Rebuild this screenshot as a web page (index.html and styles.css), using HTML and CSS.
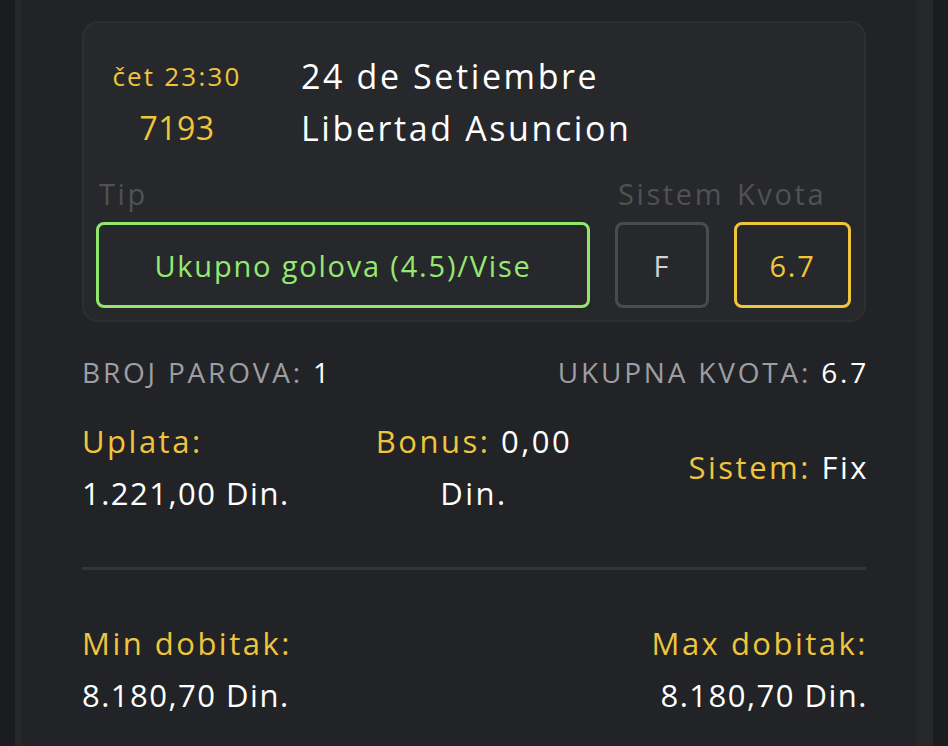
FILE: index.html
```html
<!DOCTYPE html>
<html lang="sr">
<head>
    <meta charset="UTF-8">
    <meta name="viewport" content="width=device-width, initial-scale=1.0">
    <title>Tiket</title>
    <link rel="stylesheet" href="styles.css">
</head>
<body>

    <div class="panel">
        <div class="match-card">
            <div class="match-head">
                <span class="match-time">čet 23:30</span>
                <span class="match-name">24 de Setiembre</span>
                <span class="match-code">7193</span>
                <span class="match-name">Libertad Asuncion</span>
            </div>

            <div class="pick-grid">
                <span class="pick-label">Tip</span>
                <span class="pick-label">Sistem</span>
                <span class="pick-label">Kvota</span>
                <div class="pick-box pick-tip">Ukupno golova (4.5)/Vise</div>
                <div class="pick-box pick-sys">F</div>
                <div class="pick-box pick-odd">6.7</div>
            </div>
        </div>

        <div class="summary">
            <p><span class="muted">BROJ PAROVA:</span> 1</p>
            <p class="summary-right"><span class="muted">UKUPNA KVOTA:</span> 6.7</p>
        </div>

        <div class="stake">
            <div class="stake-col">
                <p class="gold">Uplata:</p>
                <p class="amount">1.221,00 Din.</p>
            </div>
            <div class="stake-col stake-mid">
                <p><span class="gold">Bonus:</span> 0,00</p>
                <p>Din.</p>
            </div>
            <div class="stake-col stake-right">
                <p><span class="gold">Sistem:</span> Fix</p>
            </div>
        </div>

        <hr class="divider">

        <div class="payout">
            <div>
                <p class="gold">Min dobitak:</p>
                <p class="amount">8.180,70 Din.</p>
            </div>
            <div class="payout-right">
                <p class="gold">Max dobitak:</p>
                <p class="amount">8.180,70 Din.</p>
            </div>
        </div>
    </div>

</body>
</html>
```

FILE: styles.css
```css
* {
    margin: 0;
    padding: 0;
    box-sizing: border-box;
}

body {
    font-family: 'Open Sans', 'Noto Sans', sans-serif;
    background: #1b1c1f;
    color: #fff;
    padding: 0 15px;
    height: 746px;
    overflow: hidden;
}

.panel {
    background: #222326;
    border-left: 6px solid #262729;
    border-right: 17px solid #262729;
    min-height: 746px;
    padding: 21px 50px 0 61px;
}

/* Kartica meca */
.match-card {
    background: #27282b;
    border: 2px solid #2e2f32;
    border-radius: 16px;
    padding: 27px 13px 12px 12px;
}

.match-head {
    display: grid;
    grid-template-columns: 162px 1fr;
    column-gap: 43px;
    line-height: 52px;
}

.match-time {
    color: #efc53e;
    font-size: 26px;
    letter-spacing: 2.2px;
    text-align: center;
}

.match-code {
    color: #efc53e;
    font-size: 32px;
    letter-spacing: 0.5px;
    text-align: center;
}

.match-name {
    font-size: 34px;
    letter-spacing: 2.6px;
}

.pick-grid {
    display: grid;
    grid-template-columns: 494px 94px 117px;
    column-gap: 25px;
    margin-top: 20px;
}

.pick-label {
    color: #505155;
    font-size: 29px;
    letter-spacing: 2.6px;
    line-height: 40px;
    padding-left: 3px;
    margin-bottom: 8px;
    white-space: nowrap;
}

.pick-box {
    height: 86px;
    border-radius: 8px;
    border: 3px solid;
    display: flex;
    align-items: center;
    justify-content: center;
    font-size: 29px;
    letter-spacing: 1.8px;
}

.pick-tip {
    border-color: #8fe86b;
    color: #95e872;
}

.pick-sys {
    border-color: #4a4b4e;
    color: #d2d2d4;
}

.pick-odd {
    border-color: #f0c53c;
    color: #f0c53c;
}

/* Zbirni podaci */
.summary {
    display: flex;
    justify-content: space-between;
    margin-top: 32px;
    font-size: 28px;
    letter-spacing: 2.8px;
    line-height: 36px;
}

.summary-right {
    margin-right: -3px;
}

.muted {
    color: #9d9ea1;
}

.gold {
    color: #efc53e;
}

.amount {
    letter-spacing: 1.5px;
}

.stake {
    display: grid;
    grid-template-columns: 1fr 1fr 1fr;
    margin-top: 25px;
    font-size: 31px;
    letter-spacing: 2.5px;
    line-height: 52px;
}

.stake-mid {
    text-align: center;
}

.stake-right {
    display: flex;
    align-items: center;
    justify-content: flex-end;
    margin-right: -3px;
}

.divider {
    border: none;
    height: 3px;
    background: #343538;
    margin-top: 48px;
}

.payout {
    display: flex;
    justify-content: space-between;
    margin-top: 47px;
    font-size: 31px;
    letter-spacing: 2.5px;
    line-height: 52px;
}

.payout-right {
    text-align: right;
    margin-right: -2px;
}
```
